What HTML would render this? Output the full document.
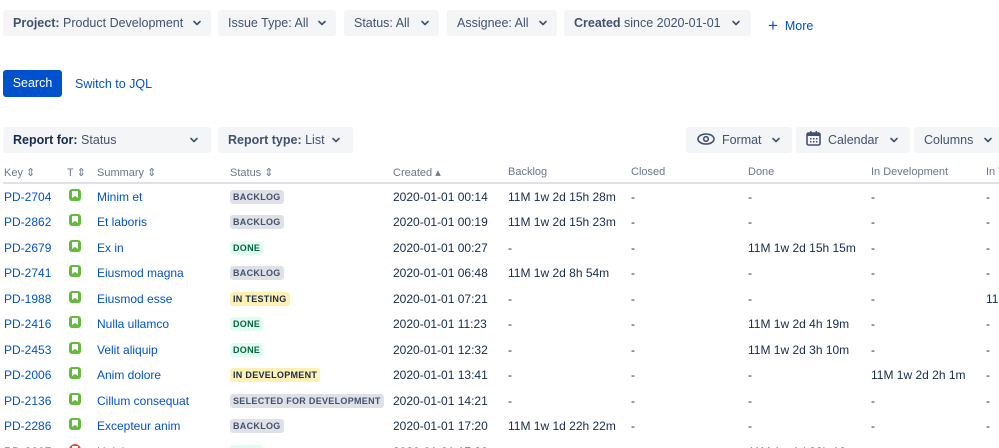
<!DOCTYPE html>
<html><head><style>
*{box-sizing:border-box;margin:0;padding:0}
html,body{width:999px;height:448px;overflow:hidden}
body{background:#fff;font-family:"Liberation Sans",sans-serif;font-size:12.5px;color:#172b4d;position:relative}
.b{position:absolute;height:26px;background:#f4f5f7;border-radius:3px;line-height:26px;padding-left:10px;color:#42526e;white-space:nowrap}
.b b{color:#42526e}
.chev{position:absolute;top:10px;width:8px;height:6px}
.a{position:absolute;white-space:nowrap}
.h{position:absolute;top:166px;font-size:11px;color:#6b778c;white-space:nowrap}
.row{position:absolute;left:0;width:999px;height:25px;font-size:12px}
.row span{position:absolute;top:5px;white-space:nowrap}
.k{left:4px;color:#0052cc}.s{left:97px;color:#0052cc}
.ic{position:absolute;left:69px;top:4px;width:12px;height:12px;border-radius:3px;background:#63ba3c}
.ic:after{content:"";position:absolute;left:3px;top:2px;width:6px;height:7px;background:#fff;clip-path:polygon(0 0,100% 0,100% 100%,50% 70%,0 100%)}
.lz{position:absolute;left:230px;top:5px;height:14px;line-height:14px;font-size:9px;font-weight:bold;padding:0 3px;border-radius:3px;letter-spacing:.3px}
.g{background:#dfe1e6;color:#42526e}.d{background:#e3fcef;color:#006644}.y{background:#fff0b3;color:#172b4d}
</style></head><body>
<svg width="0" height="0" style="position:absolute"><defs><symbol id="cv" viewBox="0 0 8 6"><path d="M1 1.5 L4 4.5 L7 1.5" fill="none" stroke="#42526e" stroke-width="1.6" stroke-linecap="round" stroke-linejoin="round"/></symbol></defs></svg>
<div class="b" style="left:3px;top:10px;width:208px"><b>Project:</b> Product Development<svg class="chev" style="left:190px"><use href="#cv"/></svg></div>
<div class="b" style="left:218px;top:10px;width:118px">Issue Type: All<svg class="chev" style="left:100px"><use href="#cv"/></svg></div>
<div class="b" style="left:344px;top:10px;width:95px">Status: All<svg class="chev" style="left:77px"><use href="#cv"/></svg></div>
<div class="b" style="left:447px;top:10px;width:110px">Assignee: All<svg class="chev" style="left:92px"><use href="#cv"/></svg></div>
<div class="b" style="left:564px;top:10px;width:187px"><b>Created</b> since 2020-01-01<svg class="chev" style="left:168px"><use href="#cv"/></svg></div>
<div class="a" style="left:768px;top:15px;color:#0052cc"><span style="font-size:17px;position:relative;top:1px">+</span>&nbsp; More</div>
<div class="a" style="left:3px;top:70px;width:59px;height:27px;background:#0052cc;color:#fff;border-radius:3px;text-align:center;line-height:27px">Search</div>
<div class="a" style="left:75px;top:77px;color:#0052cc">Switch to JQL</div>
<div class="b" style="left:3px;top:127px;width:208px"><b style="color:#172b4d">Report for:</b> Status<svg class="chev" style="left:187px"><use href="#cv"/></svg></div>
<div class="b" style="left:218px;top:127px;width:135px"><b>Report type:</b> List<svg class="chev" style="left:114px"><use href="#cv"/></svg></div>
<div class="b" style="left:686px;top:127px;width:106px;padding-left:11px"><svg width="18" height="12" viewBox="0 0 18 12" style="vertical-align:-1px"><ellipse cx="9" cy="6" rx="8" ry="5" fill="none" stroke="#42526e" stroke-width="1.6"/><circle cx="9" cy="6" r="2.3" fill="none" stroke="#42526e" stroke-width="1.6"/></svg>&nbsp; Format<svg class="chev" style="left:86px"><use href="#cv"/></svg></div>
<div class="b" style="left:796px;top:127px;width:114px"><svg width="15" height="15" viewBox="0 0 15 15" style="vertical-align:-2px"><rect x="1" y="2" width="13" height="12" rx="1.5" fill="none" stroke="#42526e" stroke-width="1.6"/><rect x="1" y="2" width="13" height="3" fill="#42526e"/><rect x="4" y="0" width="1.5" height="3" fill="#42526e"/><rect x="9.5" y="0" width="1.5" height="3" fill="#42526e"/><g fill="#42526e"><rect x="4" y="7" width="1.5" height="1.5"/><rect x="7" y="7" width="1.5" height="1.5"/><rect x="10" y="7" width="1.5" height="1.5"/><rect x="4" y="10" width="1.5" height="1.5"/><rect x="7" y="10" width="1.5" height="1.5"/><rect x="10" y="10" width="1.5" height="1.5"/></g></svg>&nbsp; Calendar<svg class="chev" style="left:94px"><use href="#cv"/></svg></div>
<div class="b" style="left:914px;top:127px;width:90px">Columns<svg class="chev" style="left:70px"><use href="#cv"/></svg></div>
<div class="h" style="left:4px">Key ⇕</div><div class="h" style="left:67px">T ⇕</div><div class="h" style="left:97px">Summary ⇕</div><div class="h" style="left:230px">Status ⇕</div><div class="h" style="left:393px">Created ▴</div><div class="h" style="left:508px">Backlog</div><div class="h" style="left:631px">Closed</div><div class="h" style="left:748px">Done</div><div class="h" style="left:871px">In Development</div><div class="h" style="left:986px">In T</div>
<div class="a" style="left:3px;top:182px;width:996px;height:2px;background:#dfe1e6"></div>

<div class="row" style="top:185px"><span class="k">PD-2704</span><i class="ic"></i><span class="s">Minim et</span><b class="lz g">BACKLOG</b><span style="left:393px">2020-01-01 00:14</span><span style="left:508px">11M 1w 2d 15h 28m</span><span style="left:631px">-</span><span style="left:748px">-</span><span style="left:871px">-</span><span style="left:986px">-</span></div>
<div class="row" style="top:210px"><span class="k">PD-2862</span><i class="ic"></i><span class="s">Et laboris</span><b class="lz g">BACKLOG</b><span style="left:393px">2020-01-01 00:19</span><span style="left:508px">11M 1w 2d 15h 23m</span><span style="left:631px">-</span><span style="left:748px">-</span><span style="left:871px">-</span><span style="left:986px">-</span></div>
<div class="row" style="top:236px"><span class="k">PD-2679</span><i class="ic"></i><span class="s">Ex in</span><b class="lz d">DONE</b><span style="left:393px">2020-01-01 00:27</span><span style="left:508px">-</span><span style="left:631px">-</span><span style="left:748px">11M 1w 2d 15h 15m</span><span style="left:871px">-</span><span style="left:986px">-</span></div>
<div class="row" style="top:261px"><span class="k">PD-2741</span><i class="ic"></i><span class="s">Eiusmod magna</span><b class="lz g">BACKLOG</b><span style="left:393px">2020-01-01 06:48</span><span style="left:508px">11M 1w 2d 8h 54m</span><span style="left:631px">-</span><span style="left:748px">-</span><span style="left:871px">-</span><span style="left:986px">-</span></div>
<div class="row" style="top:287px"><span class="k">PD-1988</span><i class="ic"></i><span class="s">Eiusmod esse</span><b class="lz y">IN TESTING</b><span style="left:393px">2020-01-01 07:21</span><span style="left:508px">-</span><span style="left:631px">-</span><span style="left:748px">-</span><span style="left:871px">-</span><span style="left:986px">11M</span></div>
<div class="row" style="top:312px"><span class="k">PD-2416</span><i class="ic"></i><span class="s">Nulla ullamco</span><b class="lz d">DONE</b><span style="left:393px">2020-01-01 11:23</span><span style="left:508px">-</span><span style="left:631px">-</span><span style="left:748px">11M 1w 2d 4h 19m</span><span style="left:871px">-</span><span style="left:986px">-</span></div>
<div class="row" style="top:338px"><span class="k">PD-2453</span><i class="ic"></i><span class="s">Velit aliquip</span><b class="lz d">DONE</b><span style="left:393px">2020-01-01 12:32</span><span style="left:508px">-</span><span style="left:631px">-</span><span style="left:748px">11M 1w 2d 3h 10m</span><span style="left:871px">-</span><span style="left:986px">-</span></div>
<div class="row" style="top:363px"><span class="k">PD-2006</span><i class="ic"></i><span class="s">Anim dolore</span><b class="lz y">IN DEVELOPMENT</b><span style="left:393px">2020-01-01 13:41</span><span style="left:508px">-</span><span style="left:631px">-</span><span style="left:748px">-</span><span style="left:871px">11M 1w 2d 2h 1m</span><span style="left:986px">-</span></div>
<div class="row" style="top:389px"><span class="k">PD-2136</span><i class="ic"></i><span class="s">Cillum consequat</span><b class="lz g">SELECTED FOR DEVELOPMENT</b><span style="left:393px">2020-01-01 14:21</span><span style="left:508px">-</span><span style="left:631px">-</span><span style="left:748px">-</span><span style="left:871px">-</span><span style="left:986px">-</span></div>
<div class="row" style="top:414px"><span class="k">PD-2286</span><i class="ic"></i><span class="s">Excepteur anim</span><b class="lz g">BACKLOG</b><span style="left:393px">2020-01-01 17:20</span><span style="left:508px">11M 1w 1d 22h 22m</span><span style="left:631px">-</span><span style="left:748px">-</span><span style="left:871px">-</span><span style="left:986px">-</span></div>
<div class="row" style="top:440px"><span class="k">PD-2007</span><i class="ic" style="background:#e5493a;border-radius:50%"></i><span class="s">Ut labore</span><b class="lz d">DONE</b><span style="left:393px">2020-01-01 17:30</span><span style="left:748px">11M 1w 1d 22h 12m</span></div>
</body></html>
